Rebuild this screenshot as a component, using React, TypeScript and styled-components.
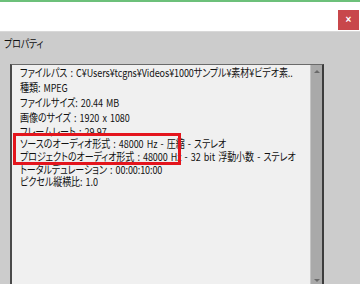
import styled, { createGlobalStyle } from "styled-components";

const GlobalStyle = createGlobalStyle`
  html, body {
    margin: 0;
    padding: 0;
    background: #cccccc;
  }
  body {
    font-family: "Noto Sans CJK JP", "Liberation Sans", sans-serif;
    color: #111;
  }
`;

const Window = styled.div`
  width: 360px;
  height: 284px;
  display: flex;
  flex-direction: column;
  overflow: hidden;
`;

const TitleBar = styled.div`
  height: 29px;
  border-top: 2px solid #6cc07a;
  background: #ffffff;
  display: flex;
  justify-content: flex-end;
  align-items: center;
  padding-right: 1px;
  flex-shrink: 0;
`;

const CloseButton = styled.button`
  width: 21px;
  height: 20px;
  margin-top: 7px;
  border: none;
  padding: 0;
  background: #c8474b;
  color: #fff;
  font-family: "Liberation Sans", sans-serif;
  font-size: 10px;
  font-weight: bold;
  line-height: 20px;
`;

const Panel = styled.div`
  flex: 1;
  background: #cccccc;
  border-top: 1px solid #d8d8d8;
  display: flex;
  flex-direction: column;
  padding: 4px 0 0 0;
`;

/* the source font is a narrow Windows UI face: squeeze the text sideways */
const Narrow = `
  transform: scaleX(0.82);
  transform-origin: left center;
  font-feature-settings: "palt" 1;
`;

const PanelTitle = styled.div`
  font-size: 11px;
  line-height: 14px;
  padding-left: 5px;
  letter-spacing: -0.3px;
  ${Narrow}
`;

const ListBox = styled.div`
  margin: 14px 0 0 10px;
  width: 310px;
  flex: 1;
  display: flex;
  border-top: 1px solid #6a6a6a;
  border-left: 2px solid #4a4a4a;
  border-right: 2px solid #3c3c3c;
  background: #f0f0f0;
  position: relative;
`;

const Content = styled.div`
  flex: 1;
  padding: 0 0 0 8px;
  font-size: 11px;
  white-space: nowrap;
  overflow: hidden;
`;

const Row = styled.div<{ $h: number }>`
  height: ${(p) => p.$h}px;
  line-height: ${(p) => p.$h}px;
  letter-spacing: -0.1px;
  word-spacing: 1.5px;
  ${Narrow}
`;

const ScrollBar = styled.div`
  width: 11px;
  background: #a9a9a9;
  border-left: 1px solid #c4c4c4;
  display: flex;
  flex-direction: column;
  align-items: center;
  justify-content: space-between;
  padding: 5px 0 2px;
`;

const Arrow = styled.div<{ $down?: boolean }>`
  width: 0;
  height: 0;
  border-left: 3px solid transparent;
  border-right: 3px solid transparent;
  ${(p) =>
    p.$down
      ? "border-top: 3px solid #6a6a6a;"
      : "border-bottom: 3px solid #6a6a6a;"}
`;

const Highlight = styled.div`
  position: absolute;
  left: 1px;
  top: 68px;
  width: 162px;
  height: 26px;
  border: 3px solid #e4151d;
  pointer-events: none;
`;

const rows: [string, number][] = [
  ["ファイルパス : C¥Users¥tcgns¥Videos¥1000サンプル¥素材¥ビデオ素..", 15],
  ["種類: MPEG", 15],
  ["ファイルサイズ: 20.44 MB", 15],
  ["画像のサイズ : 1920 x 1080", 15],
  ["フレームレート : 29.97", 12],
  ["ソースのオーディオ形式 : 48000 Hz - 圧縮 - ステレオ", 13],
  ["プロジェクトのオーディオ形式 : 48000 Hz - 32 bit 浮動小数 - ステレオ", 13],
  ["トータルデュレーション : 00:00:10:00", 12],
  ["ピクセル縦横比: 1.0", 12],
];

export default function App() {
  return (
    <>
      <GlobalStyle />
      <Window>
        <TitleBar>
          <CloseButton>×</CloseButton>
        </TitleBar>
        <Panel>
          <PanelTitle>プロパティ</PanelTitle>
          <ListBox>
            <Content>
              {rows.map(([text, h]) => (
                <Row key={text} $h={h}>
                  {text}
                </Row>
              ))}
            </Content>
            <ScrollBar>
              <Arrow />
              <Arrow $down />
            </ScrollBar>
            <Highlight />
          </ListBox>
        </Panel>
      </Window>
    </>
  );
}
